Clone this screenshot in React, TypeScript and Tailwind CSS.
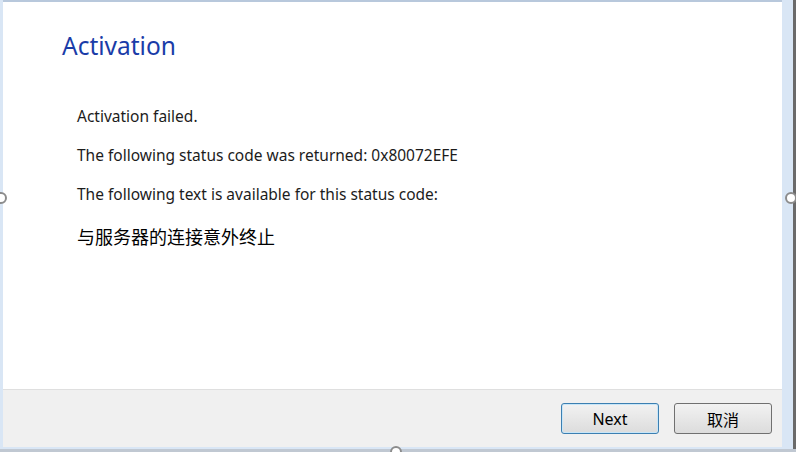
export default function App() {
  return (
    <div className="relative w-[796px] h-[452px] overflow-hidden bg-[#d9e6f5] font-['Segoe_UI','Noto_Sans','Noto_Sans_CJK_SC',sans-serif]">
      <div className="absolute left-0 top-0 w-[796px] h-[452px] flex flex-col pl-[3px] pr-[14px] pb-[5px]">
        <div className="h-[2px] bg-[#b8c8dc] shrink-0" />
        <div className="flex-1 flex flex-col bg-white">
          <div className="flex-1 flex flex-col">
            <h1 className="mt-[28px] ml-[59px] text-[24.5px] leading-[32px] text-[#1a3ca8]">Activation</h1>
            <div className="ml-[74px] mt-[44px] flex flex-col text-[15.5px] text-[#1c1c1c]">
              <p className="leading-[20px]">Activation failed.</p>
              <p className="leading-[20px] mt-[19px]">The following status code was returned: 0x80072EFE</p>
              <p className="leading-[20px] mt-[19px]">The following text is available for this status code:</p>
              <p className="leading-[24px] mt-[20px] text-[18px] text-black font-['Noto_Sans_CJK_SC',sans-serif]">与服务器的连接意外终止</p>
            </div>
          </div>
          <div className="h-[58px] shrink-0 bg-[#f0f0f0] border-t border-[#dfdfdf] flex items-center justify-end gap-[15px] pr-[10px]">
            <button className="w-[98px] h-[31px] rounded-[3px] border border-[#3c7fb1] bg-gradient-to-b from-[#f2f2f2] to-[#dcdcdc] text-[16px] text-black shadow-[inset_0_0_0_1px_#c8e6f8]">
              Next
            </button>
            <button className="w-[98px] h-[31px] rounded-[3px] border border-[#707070] bg-gradient-to-b from-[#f2f2f2] to-[#dcdcdc] text-[16px] text-black font-['Noto_Sans_CJK_SC',sans-serif]">
              取消
            </button>
          </div>
        </div>
      </div>
      <div className="absolute right-0 top-0 w-[3px] h-[452px] bg-[#6a6a6a]" />
      <div className="absolute left-0 bottom-0 w-[796px] h-[3px] bg-[#c0c8d2]" />
      <div className="absolute left-[-5px] top-[192px] w-[12px] h-[12px] rounded-full border-2 border-[#8c8c8c] bg-white" />
      <div className="absolute left-[785px] top-[192px] w-[12px] h-[12px] rounded-full border-2 border-[#8c8c8c] bg-white" />
      <div className="absolute left-[390px] top-[446px] w-[12px] h-[12px] rounded-full border-2 border-[#8c8c8c] bg-white" />
    </div>
  );
}
